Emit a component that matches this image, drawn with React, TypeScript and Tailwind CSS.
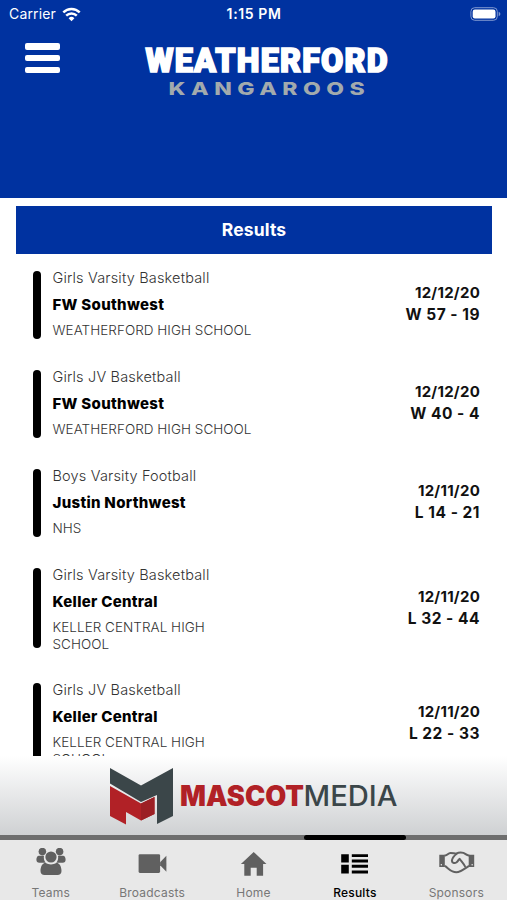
import React from "react";
import clsx from "clsx";

const results = [
  { sport: "Girls Varsity Basketball", opponent: "FW Southwest", place: "WEATHERFORD HIGH SCHOOL", date: "12/12/20", score: "W 57 - 19" },
  { sport: "Girls JV Basketball", opponent: "FW Southwest", place: "WEATHERFORD HIGH SCHOOL", date: "12/12/20", score: "W 40 - 4" },
  { sport: "Boys Varsity Football", opponent: "Justin Northwest", place: "NHS", date: "12/11/20", score: "L 14 - 21" },
  { sport: "Girls Varsity Basketball", opponent: "Keller Central", place: "KELLER CENTRAL HIGH SCHOOL", date: "12/11/20", score: "L 32 - 44" },
  { sport: "Girls JV Basketball", opponent: "Keller Central", place: "KELLER CENTRAL HIGH SCHOOL", date: "12/11/20", score: "L 22 - 33" },
];

const TeamsIcon = () => (
  <svg width="30" height="28" viewBox="0 0 30 28" fill="currentColor">
    <circle cx="6.4" cy="3.6" r="3.8" />
    <circle cx="23.6" cy="3.6" r="3.8" />
    <path d="M3 7.800h5c-.6 3 .3 5.200 1.600 7H3.400C1.400 14.800.4 13.500.4 11.800c0-2.200.8-4 2.600-4z" />
    <path d="M27 7.800h-5c.6 3-.3 5.200-1.600 7h6.200c2 0 3-1.300 3-3 0-2.200-.8-4-2.600-4z" />
    <circle cx="15" cy="9" r="6.400" fill="#e8e8e8" />
    <circle cx="15" cy="9" r="5.600" />
    <path d="M9.500 14.700c3.300 2.300 7.700 2.300 11 0 3.400.5 5 4.300 5 8.300 0 2.600-1.600 4-4 4h-13c-2.400 0-4-1.400-4-4 0-4 1.600-7.800 5-8.300z" />
  </svg>
);

const VideoIcon = () => (
  <svg width="30" height="28" viewBox="0 0 30 28" fill="currentColor">
    <rect x=".6" y="6.200" width="21.500" height="18.700" rx="1.300" />
    <path d="M22.100 14.200l6.300-6.500v16l-6.300-6.500z" />
  </svg>
);

const HomeIcon = () => (
  <svg width="30" height="28" viewBox="0 0 30 28" fill="currentColor">
    <path d="M14.700 4L27.500 16h-3.400v11.700h-6.400v-8h-6v8H5.300V16H1.900z" />
  </svg>
);

const ListIcon = () => (
  <svg width="30" height="28" viewBox="0 0 30 28" fill="currentColor">
    <path d="M1.200 6.200h7.600v8.200H1.200zM1.200 16.800h7.600v8.600H1.200zM11.800 6.200H28v2.800H11.800zM11.800 11.400H28v3H11.800zM11.800 16.800H28v2.900H11.800zM11.800 22.400H28v3H11.800z" />
  </svg>
);

const HandshakeIcon = () => (
  <svg width="36" height="28" viewBox="0 0 36 28" fill="none" stroke="currentColor" strokeWidth="2" strokeLinejoin="round" strokeLinecap="round">
    <path d="M.3 6.700h5.500V19H.3zM29.700 6.700h5.500V19h-5.500z" fill="currentColor" stroke="none" />
    <path d="M2.300 16.800h.1M33.100 16.800h.1" stroke="#e8e8e8" strokeWidth="1.400" />
    <path d="M6.200 7.500c2.200-.3 3-2.500 5.200-2.600 2.200-.1 3.800.7 5.800.8 2.300-1.300 5-1.500 7.200-.8 2 .6 3 2.400 5.300 2.600" />
    <path d="M6.200 18.200c2.400 1.600 4.500 4.200 7.300 5.200 2.700 1.300 5.400 1.200 7.800-.2 3-1.200 5.700-3.400 8.400-5" />
    <path d="M17.700 5.700c-2.200 1.700-4.600 4.600-4.800 7.200.2 2.400 3 2.600 4.800 1.300 1.500-1 1.600-2.700 2.900-3.400 1.700 2.400 3.900 4.600 5.400 7.600" />
  </svg>
);

const tabs = [
  { name: "Teams", icon: <TeamsIcon /> },
  { name: "Broadcasts", icon: <VideoIcon /> },
  { name: "Home", icon: <HomeIcon /> },
  { name: "Results", icon: <ListIcon />, active: true },
  { name: "Sponsors", icon: <HandshakeIcon /> },
];

function StatusBar() {
  return (
    <div className="grid h-7 grid-cols-3 items-center pl-[9px] pr-[6px] text-[14px] leading-none text-white">
      <div className="flex items-center gap-[6px]">
        <span className="tracking-[0.15px]">Carrier</span>
        <svg width="19" height="15" viewBox="0 0 19 15" fill="none" stroke="white" strokeWidth="2.400">
          <path d="M1.300 5.400a11.500 11.500 0 0 1 16.400 0" />
          <path d="M4.200 8.700a7.500 7.500 0 0 1 10.600 0" />
          <path d="M9.500 14.200l-2.900-2.900a4.100 4.100 0 0 1 5.800 0z" fill="white" stroke="none" />
        </svg>
      </div>
      <span className="-ml-[2px] text-center text-[14px] font-semibold tracking-[0.6px]">1:15 PM</span>
      <svg className="justify-self-end" width="31" height="14" viewBox="0 0 31 14">
        <rect x=".9" y=".7" width="26.400" height="12.600" rx="3.800" fill="none" stroke="#7f98d0" />
        <rect x="2.700" y="2.500" width="22.800" height="9" rx="2.200" fill="white" />
        <path d="M28.700 4.800c2.200.9 2.200 3.500 0 4.400z" fill="#7f98d0" />
      </svg>
    </div>
  );
}

function Header() {
  return (
    <header className="h-[198px] shrink-0 bg-[#0032a0]">
      <StatusBar />
      <div className="flex pl-[25px] pt-[15px]">
        <button className="flex h-[30px] w-[35px] flex-col justify-between" aria-label="Menu">
          <span className="h-[6.500px] w-full rounded-[2px] bg-white" />
          <span className="h-[6.500px] w-full rounded-[2px] bg-white" />
          <span className="h-[6.500px] w-full rounded-[2px] bg-white" />
        </button>
        <svg className="ml-[80px] overflow-visible" width="252" height="56" viewBox="0 0 252 56">
          <g fill="white" stroke="white" strokeWidth="1.700" fontFamily="Roboto, sans-serif" fontWeight="900">
            <text transform="scale(.95 1)" x="5.800" y="29.200" fontSize="34" textLength="255" lengthAdjust="spacing">WEATHERFORD</text>
          </g>
          <g fill="#a2aaad" fontFamily="Inter, sans-serif" fontWeight="800">
            <text transform="scale(1.2 1)" x="23.800" y="52" fontSize="17.500" textLength="168" lengthAdjust="spacingAndGlyphs" letterSpacing="4.200">KANGAROOS</text>
          </g>
        </svg>
      </div>
    </header>
  );
}

function MascotMedia() {
  return (
    <svg width="290" height="60" viewBox="0 0 290 60" fontFamily="Inter, sans-serif">
      <path fill="#3b4649" d="M1 3l31 17.500L64 3v48l-16 8V30L32 37 1 18.500z" />
      <path fill="#b12126" d="M1 21l31 17.500L45.500 32v17L32 55.500 17 47v12.500L1 51z" />
      <path fill="#9c1f24" d="M32 38.500L45.500 32v17L32 55.500z" />
      <g fontSize="28">
        <text x="71" y="40.700" fontWeight="900" fill="#b12126" textLength="124" lengthAdjust="spacingAndGlyphs">MASCOT</text>
        <text x="194.500" y="40.700" fontWeight="500" fill="#3b4649" textLength="94" lengthAdjust="spacingAndGlyphs">MEDIA</text>
      </g>
    </svg>
  );
}

export default function App() {
  return (
    <main className="flex h-[900px] w-[507px] flex-col overflow-hidden bg-white font-['Inter',sans-serif]">
      <Header />
      <section className="min-h-0 flex-1 overflow-hidden px-4 pt-2">
        <h1 className="mr-[-1px] flex h-[48px] items-center justify-center bg-[#0032a0] text-[17.500px] font-bold tracking-[0.15px] text-white">
          Results
        </h1>
        <ul role="list" className="flex flex-col gap-[31px] pt-[17px]">
          {results.map((game, i) => {
            const wraps = game.place.length > 24;
            return (
              <li key={i} className="flex items-center pl-[17px] pr-[11px]">
                <div className="max-h-[80px] w-2 self-stretch rounded-full bg-black" />
                <div className={clsx("ml-[11.500px] w-[204px] text-[#333]", wraps && "-mb-px")}>
                  <p className="text-[14.500px] font-light leading-[14px] tracking-[0.17px]">{game.sport}</p>
                  <p className="mt-[11px] text-[15px] font-extrabold leading-[18px] tracking-[0.3px] text-black">{game.opponent}</p>
                  <p className="mt-[8px] text-[13.500px] font-light leading-[17px] tracking-[0.03px]">{game.place}</p>
                </div>
                <div className={clsx("ml-auto text-right text-[15.500px] font-bold leading-[22px] text-[#111]", wraps ? "pb-1" : "pb-[2px]")}>
                  <p className="text-[15px] tracking-[0.25px]">{game.date}</p>
                  <p className="tracking-[0.5px]">{game.score}</p>
                </div>
              </li>
            );
          })}
        </ul>
      </section>
      <div className="flex h-[79px] shrink-0 justify-center bg-linear-to-b from-white to-[#cfd1d3] pt-[9px]">
        <MascotMedia />
      </div>
      <nav className="grid h-[65px] shrink-0 grid-cols-5 bg-[#e8e8e8]">
        {tabs.map((tab) => (
          <a key={tab.name} className={clsx("flex flex-col items-center", tab.active ? "text-black" : "text-[#606060]")}>
            <div className="h-[5px] w-full bg-[#6e6e6e]">
              {tab.active && <div className="h-[5px] w-full rounded-full bg-black" />}
            </div>
            <div className="ml-px mt-2 flex h-7 items-center">{tab.icon}</div>
            <span className={clsx("mt-[9px] text-[12px] leading-4 tracking-[0.2px]", tab.active ? "font-medium" : "text-[#777]")}>{tab.name}</span>
          </a>
        ))}
      </nav>
    </main>
  );
}
